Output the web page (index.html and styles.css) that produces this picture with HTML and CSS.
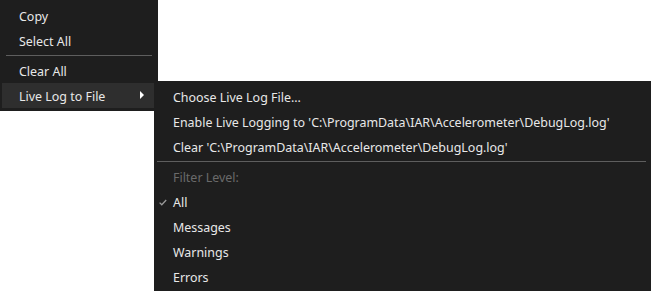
FILE: index.html
```html
<!DOCTYPE html>
<html>
<head>
<meta charset="utf-8">
<link rel="stylesheet" href="styles.css">
</head>
<body>
<div class="menu main-menu">
  <div class="item">Copy</div>
  <div class="item">Select All</div>
  <div class="sep"></div>
  <div class="item">Clear All</div>
  <div class="item hover">Live Log to File<span class="arrow"></span></div>
</div>
<div class="menu sub-menu">
  <div class="item">Choose Live Log File...</div>
  <div class="item">Enable Live Logging to 'C:\ProgramData\IAR\Accelerometer\DebugLog.log'</div>
  <div class="item">Clear 'C:\ProgramData\IAR\Accelerometer\DebugLog.log'</div>
  <div class="sep"></div>
  <div class="item disabled">Filter Level:</div>
  <div class="item checked"><svg class="check" width="8" height="7" viewBox="0 0 8 7"><path d="M0.6 3.6 L2.8 5.8 L7.2 1" fill="none" stroke="#9a9a9a" stroke-width="1.3"/></svg>All</div>
  <div class="item">Messages</div>
  <div class="item">Warnings</div>
  <div class="item">Errors</div>
</div>
</body>
</html>
```
FILE: styles.css
```css
html, body {
  margin: 0;
  padding: 0;
  background: #ffffff;
  width: 651px;
  height: 291px;
  overflow: hidden;
}
body {
  position: relative;
  font-family: "Noto Sans", "Open Sans", sans-serif;
  font-size: 12.45px;
  color: #e8e8e8;
}
.menu {
  position: absolute;
  background: #1e1e1e;
  box-sizing: border-box;
  padding: 3px 2px;
  display: flex;
  flex-direction: column;
}
.main-menu {
  left: 0;
  top: 0;
  width: 158px;
  height: 111px;
}
.sub-menu {
  left: 154px;
  top: 81px;
  width: 500px;
  height: 215px;
}
.item {
  position: relative;
  height: 25px;
  line-height: 25px;
  padding-top: 1px;
  box-sizing: border-box;
  padding-left: 17px;
  white-space: nowrap;
}
.hover {
  background: #2e2e2e;
}
.sep {
  height: 1px;
  background: #5e5e5e;
}
.main-menu .sep { margin: 2px 4px; }
.sub-menu .sep { margin: 2px 6px 2px 1px; }
.disabled {
  color: #6a6a6a;
}
.check {
  position: absolute;
  left: 3px;
  top: 10px;
}
.arrow {
  position: absolute;
  right: 12px;
  top: 8px;
  width: 0;
  height: 0;
  border-top: 4px solid transparent;
  border-bottom: 4px solid transparent;
  border-left: 4px solid #ffffff;
}
```
